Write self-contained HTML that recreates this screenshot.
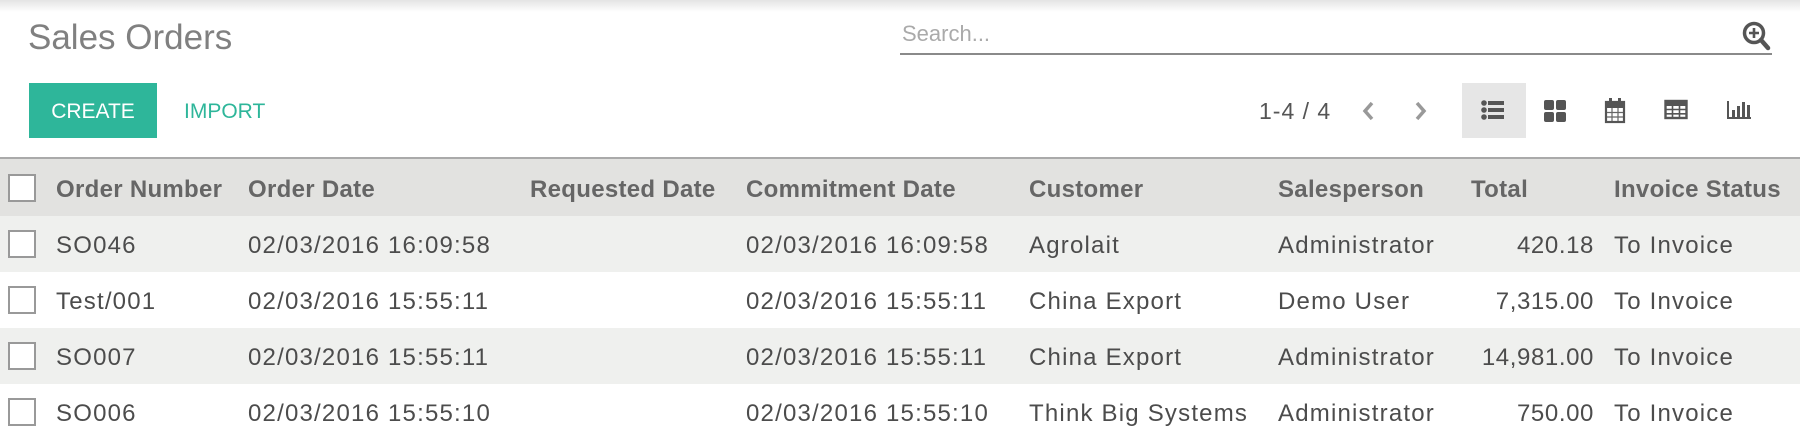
<!DOCTYPE html>
<html><head><meta charset="utf-8"><style>
*{margin:0;padding:0;box-sizing:border-box}
body{width:1800px;height:438px;overflow:hidden;background:#fff;font-family:"Liberation Sans",sans-serif;position:relative;color:#4c4c4c}
.shadow{position:absolute;left:0;top:0;width:1800px;height:12px;background:linear-gradient(#e4e4e4,#fff)}
.abs{position:absolute;white-space:nowrap}
.title{left:28px;top:18px;font-size:35px;color:#808080;line-height:40px}
.search{left:902px;top:20px;font-size:22px;color:#aaa;line-height:28px}
.sline{position:absolute;left:900px;top:53px;width:872px;height:2px;background:#8a8a8a}
.create{position:absolute;left:29px;top:83px;width:128px;height:55px;background:#2eb69a;color:#fff;font-size:21px;line-height:57px;text-align:center}
.import{left:184px;top:84px;line-height:55px;font-size:21px;color:#2eb69a}
.pager{left:1259px;top:97px;font-size:23px;line-height:28px;color:#555;letter-spacing:1px}
.vact{position:absolute;left:1462px;top:83px;width:64px;height:55px;background:#e6e6e6}
.hline{position:absolute;left:0;top:157px;width:1800px;height:2px;background:#aaa}
.hdr{position:absolute;left:0;top:159px;width:1800px;height:57px;background:#e2e2e0}
.row{position:absolute;left:0;width:1800px;height:56px}
.g{background:#eff0ee}
.cell{position:absolute;top:2px;font-size:24px;letter-spacing:1.2px;line-height:56px;white-space:nowrap;color:#4c4c4c}
.hdr .cell{font-weight:bold;color:#666;line-height:57px;letter-spacing:0.3px}
.cb{position:absolute;left:8px;top:14px;width:28px;height:28px;border:2px solid #999;background:#fff}
.hdr .cb{top:15px}
.r{text-align:right;width:200px;letter-spacing:0.6px!important}
</style></head><body>
<div class="shadow"></div>
<div class="abs title">Sales Orders</div>
<div class="abs search">Search...</div>
<div class="sline"></div>
<svg class="abs" style="left:1742px;top:20px" width="30" height="32" viewBox="0 0 30 32"><circle cx="12" cy="13" r="9.5" fill="none" stroke="#555" stroke-width="3.5"/><path d="M12 8v10M7 13h10" stroke="#555" stroke-width="2.6"/><path d="M19 20l7 8" stroke="#555" stroke-width="4.5" stroke-linecap="round"/></svg>
<div class="create">CREATE</div>
<div class="abs import">IMPORT</div>
<div class="abs pager">1-4 / 4</div>
<svg class="abs" style="left:1360px;top:100px" width="16" height="22"><path d="M12 3L5 11l7 8" fill="none" stroke="#999" stroke-width="3.5"/></svg>
<svg class="abs" style="left:1413px;top:100px" width="16" height="22"><path d="M4 3l7 8-7 8" fill="none" stroke="#999" stroke-width="3.5"/></svg>
<div class="vact"></div>
<svg class="abs" style="left:1481px;top:99px" width="24" height="22" fill="#555"><circle cx="3" cy="4" r="2.8"/><circle cx="3" cy="11" r="2.8"/><circle cx="3" cy="18" r="2.8"/><rect x="7" y="2" width="16" height="4"/><rect x="7" y="9" width="16" height="4"/><rect x="7" y="16" width="16" height="4"/></svg>
<svg class="abs" style="left:1543px;top:99px" width="24" height="24" fill="#555"><rect x="1" y="1" width="10" height="10" rx="2"/><rect x="13" y="1" width="10" height="10" rx="2"/><rect x="1" y="13" width="10" height="10" rx="2"/><rect x="13" y="13" width="10" height="10" rx="2"/></svg>
<svg class="abs" style="left:1604px;top:96px" width="22" height="28"><rect x="2" y="6" width="18" height="20" fill="#fff" stroke="#555" stroke-width="2.2"/><rect x="2" y="6" width="18" height="6" fill="#555"/><path d="M8 12v13M14 12v13M3 16.5h16M3 21h16" stroke="#666" stroke-width="1.2"/><rect x="5" y="2" width="3" height="7" fill="#555"/><rect x="14" y="2" width="3" height="7" fill="#555"/></svg>
<svg class="abs" style="left:1664px;top:99px" width="24" height="22"><rect x="1.5" y="2" width="21" height="17" fill="none" stroke="#555" stroke-width="2.4"/><rect x="1.5" y="2" width="21" height="5" fill="#555"/><path d="M8.5 6v13M15.5 6v13M2 10.5h20M2 14.8h20" stroke="#555" stroke-width="1.6"/></svg>
<svg class="abs" style="left:1726px;top:98px" width="26" height="24" fill="#555"><rect x="1" y="3" width="2" height="18"/><rect x="1" y="19" width="24" height="2"/><rect x="6" y="12" width="3" height="7"/><rect x="11" y="8" width="3" height="11"/><rect x="16" y="4" width="3" height="15"/><rect x="21" y="7" width="3" height="12"/></svg>
<div class="hline"></div>
<div class="hdr"><div class="cb"></div>
<div class="cell" style="left:56px">Order Number</div>
<div class="cell" style="left:248px">Order Date</div>
<div class="cell" style="left:530px">Requested Date</div>
<div class="cell" style="left:746px">Commitment Date</div>
<div class="cell" style="left:1029px">Customer</div>
<div class="cell" style="left:1278px">Salesperson</div>
<div class="cell" style="left:1471px">Total</div>
<div class="cell" style="left:1614px">Invoice Status</div>
</div>
<div class="row g" style="top:216px"><div class="cb"></div>
<div class="cell" style="left:56px">SO046</div><div class="cell" style="left:248px">02/03/2016 16:09:58</div><div class="cell" style="left:746px">02/03/2016 16:09:58</div><div class="cell" style="left:1029px">Agrolait</div><div class="cell" style="left:1278px">Administrator</div><div class="cell r" style="left:1394px">420.18</div><div class="cell" style="left:1614px">To Invoice</div></div>
<div class="row" style="top:272px"><div class="cb"></div>
<div class="cell" style="left:56px">Test/001</div><div class="cell" style="left:248px">02/03/2016 15:55:11</div><div class="cell" style="left:746px">02/03/2016 15:55:11</div><div class="cell" style="left:1029px">China Export</div><div class="cell" style="left:1278px">Demo User</div><div class="cell r" style="left:1394px">7,315.00</div><div class="cell" style="left:1614px">To Invoice</div></div>
<div class="row g" style="top:328px"><div class="cb"></div>
<div class="cell" style="left:56px">SO007</div><div class="cell" style="left:248px">02/03/2016 15:55:11</div><div class="cell" style="left:746px">02/03/2016 15:55:11</div><div class="cell" style="left:1029px">China Export</div><div class="cell" style="left:1278px">Administrator</div><div class="cell r" style="left:1394px">14,981.00</div><div class="cell" style="left:1614px">To Invoice</div></div>
<div class="row" style="top:384px"><div class="cb"></div>
<div class="cell" style="left:56px">SO006</div><div class="cell" style="left:248px">02/03/2016 15:55:10</div><div class="cell" style="left:746px">02/03/2016 15:55:10</div><div class="cell" style="left:1029px">Think Big Systems</div><div class="cell" style="left:1278px">Administrator</div><div class="cell r" style="left:1394px">750.00</div><div class="cell" style="left:1614px">To Invoice</div></div>
</body></html>
